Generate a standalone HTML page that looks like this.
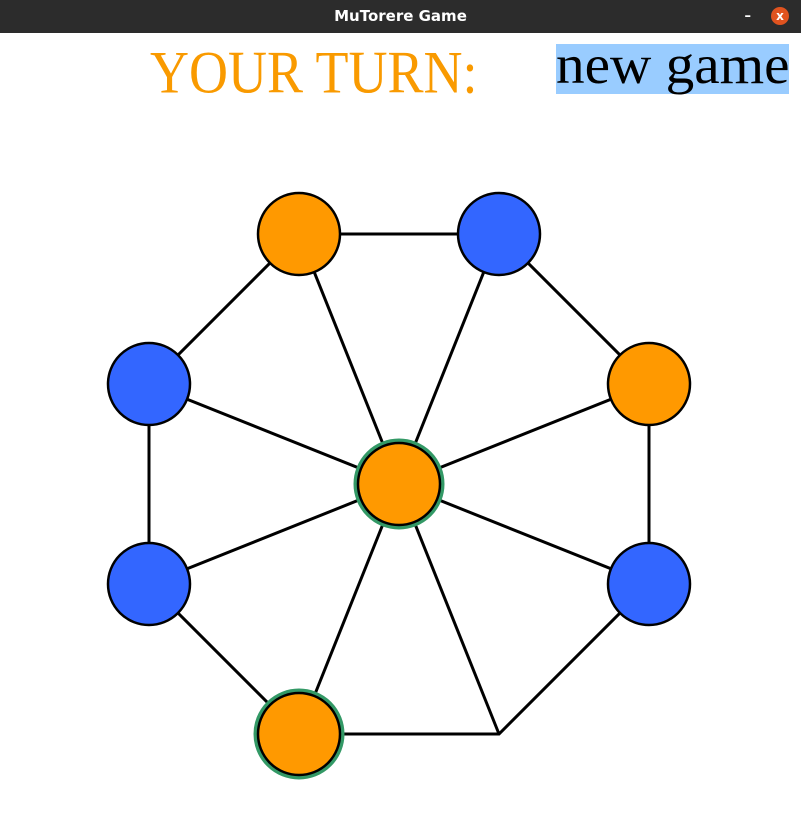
<!DOCTYPE html>
<html><head><style>
body{margin:0;width:801px;height:834px;overflow:hidden;background:#fff;position:relative;font-family:"Liberation Serif",serif}
.bar{position:absolute;left:0;top:0;width:801px;height:33px;background:#2c2c2c;color:#fff;font:bold 15px "DejaVu Sans",sans-serif;text-align:center;line-height:33px}
.x{position:absolute;right:12px;top:7px;width:18px;height:18px;border-radius:50%;background:#e0531f;color:#fff;font-size:12px;line-height:18px}
.min{position:absolute;right:50px;top:0;font-size:13px}
.turn{position:absolute;left:150px;top:46px;color:#f99a00;font-size:54px;line-height:60px;white-space:nowrap;transform:scaleY(1.12);transform-origin:0 100%}
.ng{position:absolute;left:556px;top:44px;width:233px;height:50px;background:#99ccff}
.ng span{position:absolute;left:0;top:-3px;color:#000;font-size:52px;line-height:50px;white-space:nowrap;transform:scale(1.1,1.05);transform-origin:0 50%}
</style></head><body>
<div class="bar">MuTorere Game<span class="min">–</span><span class="x">x</span></div>
<div class="turn">YOUR TURN:</div>
<div class="ng"><span>new game</span></div>
<svg width="801" height="834" style="position:absolute;left:0;top:0">
<g stroke="#000" stroke-width="3">
<polyline fill="none" points="299,234 499,234 649,384 649,584 499,734 299,734 149,584 149,384 299,234"/>
<line x1="399" y1="484" x2="299" y2="234"/><line x1="399" y1="484" x2="499" y2="234"/>
<line x1="399" y1="484" x2="649" y2="384"/><line x1="399" y1="484" x2="649" y2="584"/>
<line x1="399" y1="484" x2="499" y2="734"/><line x1="399" y1="484" x2="299" y2="734"/>
<line x1="399" y1="484" x2="149" y2="584"/><line x1="399" y1="484" x2="149" y2="384"/>
</g>
<g stroke="#339966" stroke-width="5" fill="none">
<circle cx="399" cy="484" r="43"/><circle cx="299" cy="734" r="43"/>
</g>
<g stroke="#000" stroke-width="2.5">
<circle cx="299" cy="234" r="41" fill="#ff9900"/>
<circle cx="499" cy="234" r="41" fill="#3366ff"/>
<circle cx="649" cy="384" r="41" fill="#ff9900"/>
<circle cx="649" cy="584" r="41" fill="#3366ff"/>
<circle cx="299" cy="734" r="41" fill="#ff9900"/>
<circle cx="149" cy="584" r="41" fill="#3366ff"/>
<circle cx="149" cy="384" r="41" fill="#3366ff"/>
<circle cx="399" cy="484" r="41" fill="#ff9900"/>
</g>
</svg>
</body></html>
